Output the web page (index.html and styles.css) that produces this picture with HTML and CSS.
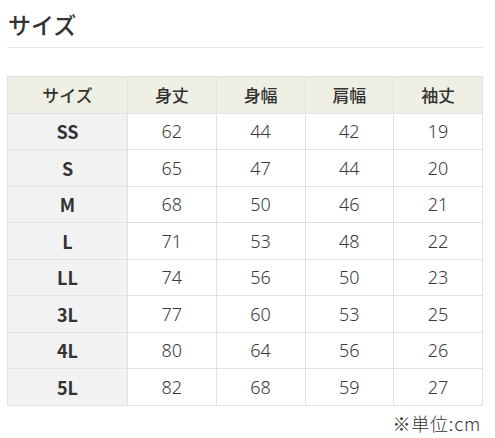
FILE: index.html
```html
<!DOCTYPE html>
<html lang="ja">
<head>
<meta charset="utf-8">
<link rel="stylesheet" href="styles.css">
</head>
<body>
<div class="page">
  <h2 class="title">サイズ</h2>
  <table class="size-table">
    <thead>
      <tr><th>サイズ</th><th>身丈</th><th>身幅</th><th>肩幅</th><th>袖丈</th></tr>
    </thead>
    <tbody>
      <tr><th>SS</th><td>62</td><td>44</td><td>42</td><td>19</td></tr>
      <tr><th>S</th><td>65</td><td>47</td><td>44</td><td>20</td></tr>
      <tr><th>M</th><td>68</td><td>50</td><td>46</td><td>21</td></tr>
      <tr><th>L</th><td>71</td><td>53</td><td>48</td><td>22</td></tr>
      <tr><th>LL</th><td>74</td><td>56</td><td>50</td><td>23</td></tr>
      <tr><th>3L</th><td>77</td><td>60</td><td>53</td><td>25</td></tr>
      <tr><th>4L</th><td>80</td><td>64</td><td>56</td><td>26</td></tr>
      <tr><th>5L</th><td>82</td><td>68</td><td>59</td><td>27</td></tr>
    </tbody>
  </table>
  <p class="unit">※単位:cm</p>
</div>
</body>
</html>
```
FILE: styles.css
```css
html, body {
  margin: 0;
  padding: 0;
  background: #fff;
}
body {
  font-family: "Noto Sans CJK JP", "Noto Sans", sans-serif;
  color: #333;
}
.page {
  width: 476px;
  padding: 8px 12px 0 7px;
}
.title {
  margin: 0;
  font-size: 23px;
  font-weight: 500;
  line-height: 33px;
  padding: 0 0 6px 1px;
  border-bottom: 1px solid #e6e6e6;
  color: #333;
}
.size-table {
  margin-top: 28px;
  width: 476px;
  border-collapse: collapse;
  table-layout: fixed;
}
.size-table th,
.size-table td {
  border: 1px solid #e2e2e2;
  height: 35.5px;
  padding: 0;
  text-align: center;
  vertical-align: middle;
  font-size: 17px;
  line-height: 1;
  color: #333;
}
.size-table td {
  font-family: "Noto Sans", "Noto Sans CJK JP", sans-serif;
  font-weight: 300;
  font-size: 18px;
  color: #3a3a3a;
  background: #fff;
}
.size-table thead th {
  background: #f0efe3;
  font-weight: 500;
  font-size: 17px;
}
.size-table thead th:first-child {
  width: 119px;
}
.size-table tbody th {
  background: #f2f2f2;
  font-weight: bold;
  font-size: 18px;
}
.unit {
  margin: 4px 0 0;
  padding-right: 2px;
  text-align: right;
  font-size: 18px;
  font-weight: 300;
  letter-spacing: 0.8px;
  line-height: 26px;
}
```
